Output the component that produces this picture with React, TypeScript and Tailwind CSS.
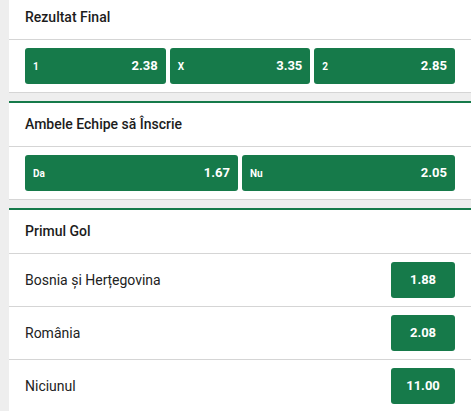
const green = 'bg-[#167a4a]';

type Pick = { label: string; odds: string };

const rezultat: Pick[] = [
    { label: '1', odds: '2.38' },
    { label: 'X', odds: '3.35' },
    { label: '2', odds: '2.85' },
];

const ambele: Pick[] = [
    { label: 'Da', odds: '1.67' },
    { label: 'Nu', odds: '2.05' },
];

const primulGol: Pick[] = [
    { label: 'Bosnia și Herțegovina', odds: '1.88' },
    { label: 'România', odds: '2.08' },
    { label: 'Niciunul', odds: '11.00' },
];

function MarketHeader({ title }: { title: string }) {
    return (
        <div className="h-[44px] flex items-center px-4 border-b border-[#d5d5d5] text-[14px] font-medium text-[#1c1c1c]">
            {title}
        </div>
    );
}

function OddsButton({ pick }: { pick: Pick }) {
    return (
        <button className={`${green} h-9 rounded-[3px] flex items-center justify-between px-2 text-white`}>
            <span className="text-[10px] font-bold">{pick.label}</span>
            <span className="text-[13px] font-bold">{pick.odds}</span>
        </button>
    );
}

export default function App() {
    return (
        <div className="h-[411px] overflow-hidden bg-[#eeeeee] pl-[9px] font-['Roboto',sans-serif]">
            <div className="-mt-[6px] flex flex-col gap-2">
                {/* Rezultat Final */}
                <section className="bg-white border-t-2 border-b border-t-[#167a4a] border-b-[#d5d5d5]">
                    <MarketHeader title="Rezultat Final" />
                    <div className="grid grid-cols-3 gap-1 px-4 py-2">
                        {rezultat.map((p) => (
                            <OddsButton key={p.label} pick={p} />
                        ))}
                    </div>
                </section>

                {/* Ambele Echipe */}
                <section className="bg-white border-t-2 border-b border-t-[#167a4a] border-b-[#d5d5d5]">
                    <MarketHeader title="Ambele Echipe să Înscrie" />
                    <div className="grid grid-cols-2 gap-1 px-4 py-2">
                        {ambele.map((p) => (
                            <OddsButton key={p.label} pick={p} />
                        ))}
                    </div>
                </section>

                {/* Primul Gol */}
                <section className="bg-white border-t-2 border-t-[#167a4a]">
                    <MarketHeader title="Primul Gol" />
                    {primulGol.map((p) => (
                        <div key={p.label} className="flex items-center justify-between px-4 py-2 border-b border-[#d5d5d5]">
                            <span className="text-[14px] text-[#222]">{p.label}</span>
                            <button className={`${green} h-9 w-16 rounded-[3px] flex items-center justify-center text-white text-[13px] font-bold`}>
                                {p.odds}
                            </button>
                        </div>
                    ))}
                </section>
            </div>
        </div>
    );
}
